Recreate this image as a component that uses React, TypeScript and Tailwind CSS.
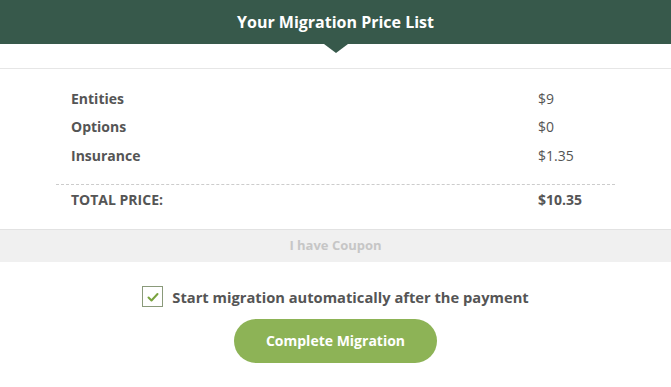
const rows = [
  { label: 'Entities', price: '$9' },
  { label: 'Options', price: '$0' },
  { label: 'Insurance', price: '$1.35' },
]

export default function App() {
  return (
    <div className="w-[671px] h-[387px] bg-white font-['Open_Sans',sans-serif] text-[#555]">
      {/* Header */}
      <div className="relative h-[44px] bg-[#37594b] flex items-center justify-center">
        <h1 className="text-white text-[16px] font-bold">Your Migration Price List</h1>
        <span className="absolute left-1/2 -translate-x-1/2 top-[44px] w-0 h-0 border-l-[12px] border-r-[12px] border-t-[9px] border-l-transparent border-r-transparent border-t-[#37594b]" />
      </div>

      <div className="h-[25px] border-b border-[#e6e6e6]" />

      {/* Price rows */}
      <div className="px-[56px] pt-[15px]">
        <div className="px-[15px]">
          {rows.map((r) => (
            <div key={r.label} className="flex h-[28.5px] items-center text-[14px]">
              <span className="flex-1 font-bold">{r.label}</span>
              <span className="w-[62px]">{r.price}</span>
            </div>
          ))}
        </div>
        <div className="mt-[14px] border-t border-dashed border-[#ccc]" />
        <div className="px-[15px] flex h-[30px] items-center text-[14px] font-bold">
          <span className="flex-1">TOTAL PRICE:</span>
          <span className="w-[62px]">$10.35</span>
        </div>
      </div>

      {/* Coupon */}
      <div className="mt-[14px] h-[33px] bg-[#f0f0f0] border-t border-[#e2e2e2] flex items-center justify-center">
        <span className="text-[13px] font-bold text-[#c6c6c6]">I have Coupon</span>
      </div>

      {/* Auto start */}
      <div className="mt-[24px] flex items-center justify-center gap-[9px]">
        <span className="w-[21px] h-[21px] border border-[#8a9a7a] flex items-center justify-center">
          <svg width="14" height="14" viewBox="0 0 14 14" fill="none" stroke="#7aa33f" strokeWidth="2" strokeLinecap="round" strokeLinejoin="round">
            <path d="M2.5 7.5 L5.5 10.5 L11.5 4" />
          </svg>
        </span>
        <span className="text-[14.7px] font-bold">Start migration automatically after the payment</span>
      </div>

      <div className="mt-[11px] flex justify-center">
        <button className="w-[203px] h-[44px] rounded-full bg-[#8db356] text-white text-[14px] font-bold">
          Complete Migration
        </button>
      </div>
    </div>
  )
}
